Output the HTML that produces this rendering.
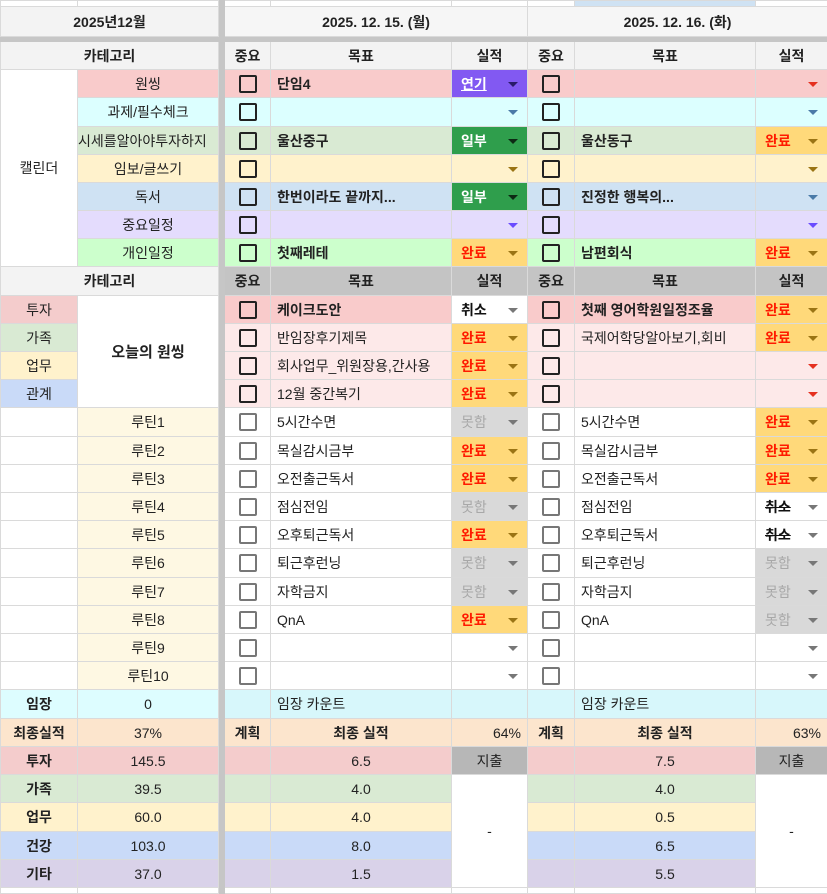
<!DOCTYPE html>
<html><head><meta charset="utf-8">
<style>
*{box-sizing:border-box;margin:0;padding:0}
body{width:827px;height:891px;overflow:hidden;background:#fff;font-family:"Liberation Sans","Noto Sans CJK KR",sans-serif;font-size:14px;color:#222}
table{border-collapse:collapse;table-layout:fixed;width:827px}
td{border:1px solid #dadada;text-align:center;vertical-align:middle;white-space:nowrap;overflow:hidden;position:relative;padding:0}
.g{background:#c6c6c6;border-color:#c6c6c6}
.h{background:#f3f3f3;font-weight:bold}
.gh{background:#c4c4c4;font-weight:bold}
.b{font-weight:bold}
.l{text-align:left;padding-left:6px}
.cb{display:inline-block;width:18px;height:18px;border:2px solid #222;border-radius:2px;vertical-align:middle}
.cg{display:inline-block;width:18px;height:18px;border:2px solid #777;border-radius:2px;vertical-align:middle}
.r{text-align:left;padding-left:9px;font-weight:bold}
.r i{position:absolute;right:9px;top:12px;width:0;height:0;border-left:5px solid transparent;border-right:5px solid transparent;border-top:5px solid #777}
.wan{background:#ffd97a;color:#ff1a00}
.wan i{border-top-color:#9a7414}
.mot{background:#d9d9d9;color:#a8a8a8;font-weight:normal}
.yeon{background:#8259f2;color:#fff;text-decoration:underline}
.yeon i{border-top-color:#2a1a6a}
.il{background:#2f9e4c;color:#fff}
.il i{border-top-color:#0d2a14}
.p1{background:#f9cbcb}.p2{background:#dcffff}.p3{background:#d9ead3}.p4{background:#fff2cc}.p5{background:#cfe2f3}.p6{background:#e4dcfd}.p7{background:#ccffcc}
.lp{background:#fde9e9}
.ru{background:#fef8e3}
.im{background:#d7f7fb}
.pe{background:#fce5cd}
.c9{background:#c9daf8}.d9{background:#d9d2e9}
.red i{border-top-color:#e53020}.blu i{border-top-color:#4a7aa8}.gold i{border-top-color:#9a7414}.pur i{border-top-color:#6a4cff}
.ji{background:#b7b7b7}
</style></head><body>
<table>
<colgroup><col style="width:77px"><col style="width:141px"><col style="width:6px"><col style="width:46px"><col style="width:181px"><col style="width:76px"><col style="width:47px"><col style="width:181px"><col style="width:72px"></colgroup>
<tr style="height:6px"><td></td><td></td><td class="g"></td><td></td><td></td><td></td><td></td><td style="background:#cfe2f3"></td><td></td></tr>
<tr style="height:30px"><td colspan="2" class="h">2025년12월</td><td class="g"></td><td colspan="3" class="h" style="background:#f6f6f6">2025. 12. 15. (월)</td><td colspan="3" class="h" style="background:#f6f6f6">2025. 12. 16. (화)</td></tr>
<tr style="height:5px"><td colspan="9" class="g"></td></tr>
<tr style="height:28px"><td colspan="2" class="h">카테고리</td><td class="g"></td><td class="h">중요</td><td class="h">목표</td><td class="h">실적</td><td class="h">중요</td><td class="h">목표</td><td class="h">실적</td></tr>

<tr style="height:28px"><td rowspan="7">캘린더</td><td class="p1" style="border-left:1px solid #000">원씽</td><td class="g"></td><td class="p1"><span class="cb"></span></td><td class="p1 l b">단임4</td><td class="r yeon">연기<i></i></td><td class="p1"><span class="cb"></span></td><td class="p1"></td><td class="r p1 red"><i></i></td></tr>
<tr style="height:29px"><td class="p2" style="border-left:1px solid #000">과제/필수체크</td><td class="g"></td><td class="p2"><span class="cb"></span></td><td class="p2"></td><td class="r p2 blu"><i></i></td><td class="p2"><span class="cb"></span></td><td class="p2"></td><td class="r p2 blu"><i></i></td></tr>
<tr style="height:28px"><td class="p3" style="border-left:1px solid #000;text-align:left">시세를알아야투자하지</td><td class="g"></td><td class="p3"><span class="cb"></span></td><td class="p3 l b">울산중구</td><td class="r il">일부<i></i></td><td class="p3"><span class="cb"></span></td><td class="p3 l b">울산동구</td><td class="r wan">완료<i></i></td></tr>
<tr style="height:28px"><td class="p4" style="border-left:1px solid #000">임보/글쓰기</td><td class="g"></td><td class="p4"><span class="cb"></span></td><td class="p4"></td><td class="r p4 gold"><i></i></td><td class="p4"><span class="cb"></span></td><td class="p4"></td><td class="r p4 gold"><i></i></td></tr>
<tr style="height:28px"><td class="p5" style="border-left:1px solid #000">독서</td><td class="g"></td><td class="p5"><span class="cb"></span></td><td class="p5 l b">한번이라도 끝까지...</td><td class="r il">일부<i></i></td><td class="p5"><span class="cb"></span></td><td class="p5 l b">진정한 행복의...</td><td class="r p5 blu"><i></i></td></tr>
<tr style="height:28px"><td class="p6" style="border-left:1px solid #000">중요일정</td><td class="g"></td><td class="p6"><span class="cb"></span></td><td class="p6"></td><td class="r p6 pur"><i></i></td><td class="p6"><span class="cb"></span></td><td class="p6"></td><td class="r p6 pur"><i></i></td></tr>
<tr style="height:28px"><td class="p7" style="border-left:1px solid #000">개인일정</td><td class="g"></td><td class="p7"><span class="cb"></span></td><td class="p7 l b">첫째레테</td><td class="r wan">완료<i></i></td><td class="p7"><span class="cb"></span></td><td class="p7 l b">남편회식</td><td class="r wan">완료<i></i></td></tr>

<tr style="height:29px"><td colspan="2" class="h">카테고리</td><td class="g"></td><td class="gh">중요</td><td class="gh">목표</td><td class="gh">실적</td><td class="gh">중요</td><td class="gh">목표</td><td class="gh">실적</td></tr>
<tr style="height:28px"><td class="p1" style="background:#f4cccc">투자</td><td rowspan="4" class="b" style="font-size:15px">오늘의 원씽</td><td class="g"></td><td class="p1"><span class="cb"></span></td><td class="p1 l b">케이크도안</td><td class="r" style="color:#111">취소<i></i></td><td class="p1"><span class="cb"></span></td><td class="p1 l b">첫째 영어학원일정조율</td><td class="r wan">완료<i></i></td></tr>
<tr style="height:28px"><td class="p3">가족</td><td class="g"></td><td class="lp"><span class="cb"></span></td><td class="lp l">반임장후기제목</td><td class="r wan">완료<i></i></td><td class="lp"><span class="cb"></span></td><td class="lp l">국제어학당알아보기,회비</td><td class="r wan">완료<i></i></td></tr>
<tr style="height:28px"><td class="p4">업무</td><td class="g"></td><td class="lp"><span class="cb"></span></td><td class="lp l">회사업무_위원장용,간사용</td><td class="r wan">완료<i></i></td><td class="lp"><span class="cb"></span></td><td class="lp"></td><td class="r lp red"><i></i></td></tr>
<tr style="height:28px"><td class="c9">관계</td><td class="g"></td><td class="lp"><span class="cb"></span></td><td class="lp l">12월 중간복기</td><td class="r wan">완료<i></i></td><td class="lp"><span class="cb"></span></td><td class="lp"></td><td class="r lp red"><i></i></td></tr>

<tr style="height:29px"><td></td><td class="ru">루틴1</td><td class="g"></td><td><span class="cg"></span></td><td class="l">5시간수면</td><td class="r mot">못함<i></i></td><td><span class="cg"></span></td><td class="l">5시간수면</td><td class="r wan">완료<i></i></td></tr>
<tr style="height:28px"><td></td><td class="ru">루틴2</td><td class="g"></td><td><span class="cg"></span></td><td class="l">목실감시금부</td><td class="r wan">완료<i></i></td><td><span class="cg"></span></td><td class="l">목실감시금부</td><td class="r wan">완료<i></i></td></tr>
<tr style="height:28px"><td></td><td class="ru">루틴3</td><td class="g"></td><td><span class="cg"></span></td><td class="l">오전출근독서</td><td class="r wan">완료<i></i></td><td><span class="cg"></span></td><td class="l">오전출근독서</td><td class="r wan">완료<i></i></td></tr>
<tr style="height:28px"><td></td><td class="ru">루틴4</td><td class="g"></td><td><span class="cg"></span></td><td class="l">점심전임</td><td class="r mot">못함<i></i></td><td><span class="cg"></span></td><td class="l">점심전임</td><td class="r" style="text-decoration:line-through;color:#111">취소<i></i></td></tr>
<tr style="height:28px"><td></td><td class="ru">루틴5</td><td class="g"></td><td><span class="cg"></span></td><td class="l">오후퇴근독서</td><td class="r wan">완료<i></i></td><td><span class="cg"></span></td><td class="l">오후퇴근독서</td><td class="r" style="text-decoration:line-through;color:#111">취소<i></i></td></tr>
<tr style="height:29px"><td></td><td class="ru">루틴6</td><td class="g"></td><td><span class="cg"></span></td><td class="l">퇴근후런닝</td><td class="r mot">못함<i></i></td><td><span class="cg"></span></td><td class="l">퇴근후런닝</td><td class="r mot">못함<i></i></td></tr>
<tr style="height:28px"><td></td><td class="ru">루틴7</td><td class="g"></td><td><span class="cg"></span></td><td class="l">자학금지</td><td class="r mot">못함<i></i></td><td><span class="cg"></span></td><td class="l">자학금지</td><td class="r mot">못함<i></i></td></tr>
<tr style="height:28px"><td></td><td class="ru">루틴8</td><td class="g"></td><td><span class="cg"></span></td><td class="l">QnA</td><td class="r wan">완료<i></i></td><td><span class="cg"></span></td><td class="l">QnA</td><td class="r mot">못함<i></i></td></tr>
<tr style="height:28px"><td></td><td class="ru">루틴9</td><td class="g"></td><td><span class="cg"></span></td><td></td><td class="r"><i></i></td><td><span class="cg"></span></td><td></td><td class="r"><i></i></td></tr>
<tr style="height:28px"><td></td><td class="ru">루틴10</td><td class="g"></td><td><span class="cg"></span></td><td></td><td class="r"><i></i></td><td><span class="cg"></span></td><td></td><td class="r"><i></i></td></tr>

<tr style="height:29px"><td class="b" style="background:#ddfdff">임장</td><td style="background:#ddfdff">0</td><td class="g"></td><td class="im"></td><td class="im l">임장 카운트</td><td class="im"></td><td class="im"></td><td class="im l">임장 카운트</td><td class="im"></td></tr>
<tr style="height:28px"><td class="pe b">최종실적</td><td class="pe">37%</td><td class="g"></td><td class="pe b">계획</td><td class="pe b">최종 실적</td><td class="pe" style="text-align:right;padding-right:6px">64%</td><td class="pe b">계획</td><td class="pe b">최종 실적</td><td class="pe" style="text-align:right;padding-right:6px">63%</td></tr>
<tr style="height:28px"><td class="b" style="background:#f4cccc">투자</td><td style="background:#f4cccc">145.5</td><td class="g"></td><td style="background:#f4cccc"></td><td style="background:#f4cccc">6.5</td><td class="ji">지출</td><td style="background:#f4cccc"></td><td style="background:#f4cccc">7.5</td><td class="ji">지출</td></tr>
<tr style="height:28px"><td class="p3 b">가족</td><td class="p3">39.5</td><td class="g"></td><td class="p3"></td><td class="p3">4.0</td><td rowspan="4" style="background:#fff">-</td><td class="p3"></td><td class="p3">4.0</td><td rowspan="4" style="background:#fff">-</td></tr>
<tr style="height:29px"><td class="p4 b">업무</td><td class="p4">60.0</td><td class="g"></td><td class="p4"></td><td class="p4">4.0</td><td class="p4"></td><td class="p4">0.5</td></tr>
<tr style="height:28px"><td class="c9 b">건강</td><td class="c9">103.0</td><td class="g"></td><td class="c9"></td><td class="c9">8.0</td><td class="c9"></td><td class="c9">6.5</td></tr>
<tr style="height:28px"><td class="d9 b">기타</td><td class="d9">37.0</td><td class="g"></td><td class="d9"></td><td class="d9">1.5</td><td class="d9"></td><td class="d9">5.5</td></tr>
<tr style="height:6px"><td></td><td></td><td class="g"></td><td></td><td></td><td></td><td></td><td></td><td></td></tr>
</table>
</body></html>
